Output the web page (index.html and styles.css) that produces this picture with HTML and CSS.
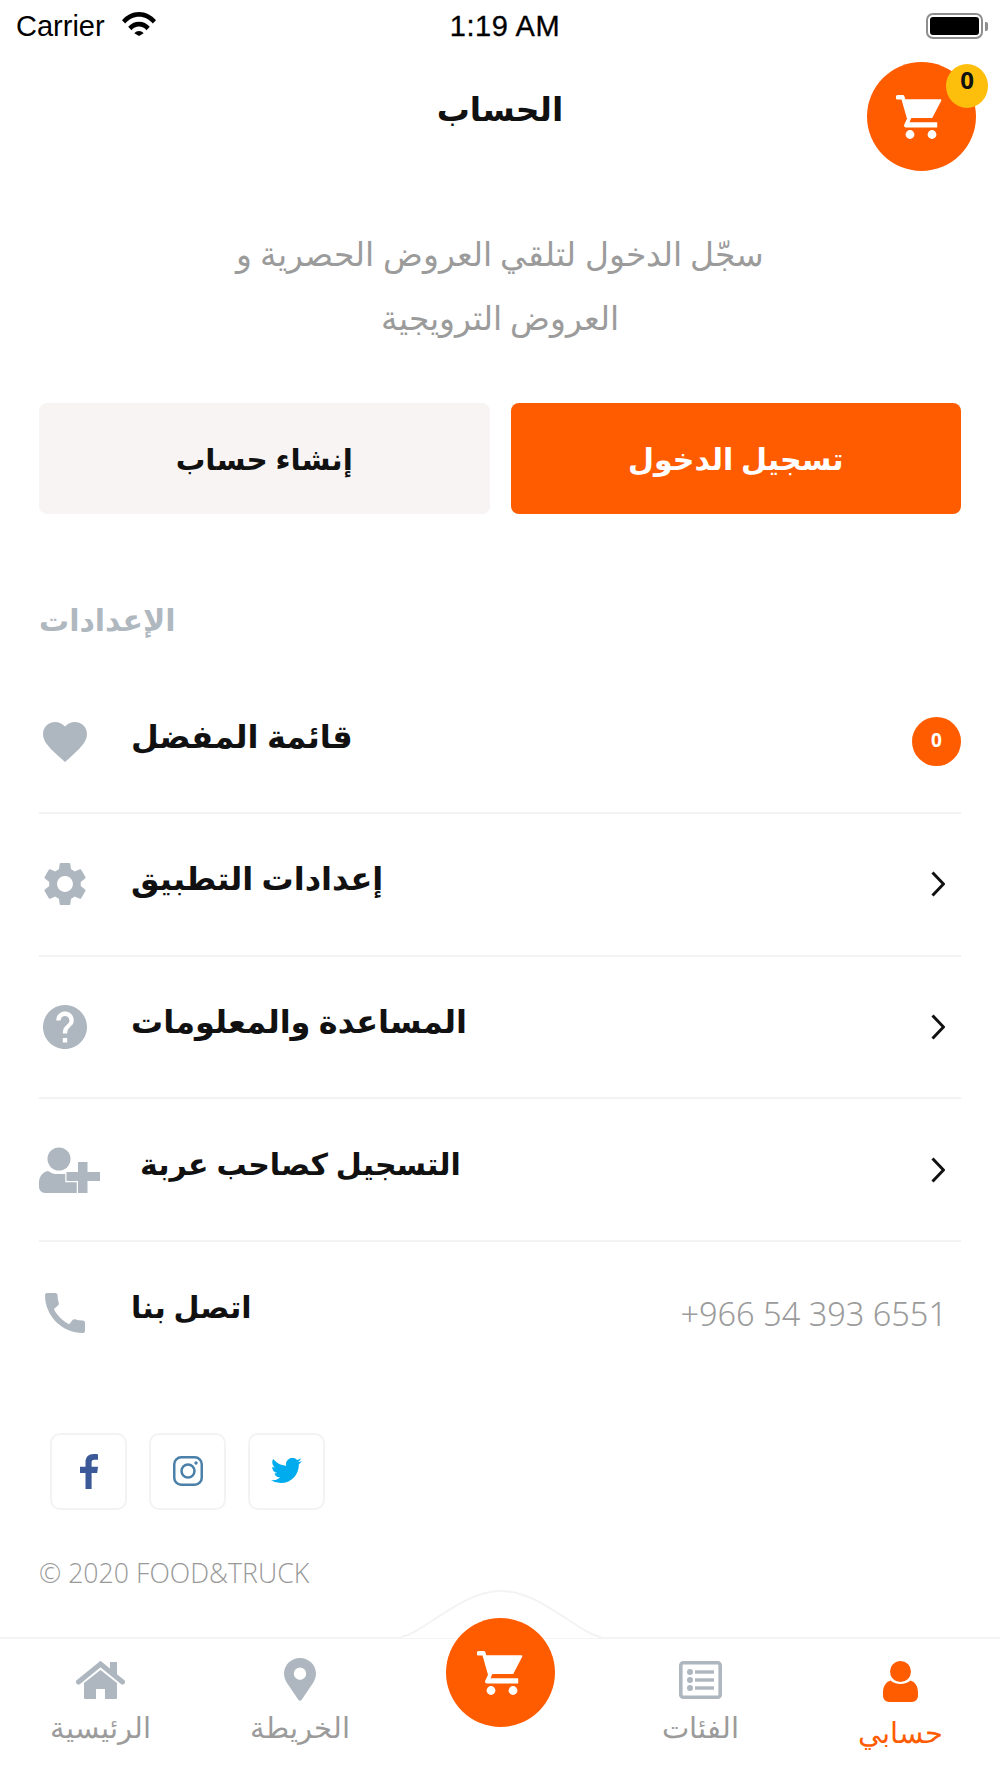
FILE: index.html
```html
<!DOCTYPE html>
<html lang="ar">
<head>
<meta charset="utf-8">
<title>الحساب</title>
<link rel="stylesheet" href="styles.css">
</head>
<body>
<div class="app">
  <div class="status">
    <div class="status-left">
      <span class="carrier">Carrier</span>
      <svg class="wifi" viewBox="0 0 34 24"><path d="M0 8.200C4.400 3.200 10.400 0 17 0s12.600 3.200 17 8.200l-3.200 3.400C27.200 7.500 22.400 4.800 17 4.800S6.800 7.500 3.200 11.600z"/><path d="M6.200 14.800C9 11.700 12.800 9.800 17 9.800s8 1.900 10.800 5l-3.300 3.400C22.600 16 20 14.600 17 14.600s-5.600 1.400-7.500 3.600z"/><path d="M12.400 21.200c1.200-1.300 2.800-2.100 4.600-2.100s3.400.8 4.600 2.100L17 24z"/></svg>
    </div>
    <span class="clock">1:19 AM</span>
    <div class="battery"><span class="battery-cell"><span class="battery-fill"></span></span><span class="battery-nub"></span></div>
  </div>

  <header class="head">
    <span></span>
    <h1 class="title">الحساب</h1>
    <div class="head-cart">
      <div class="cart-round">
        <svg class="cart" viewBox="0 0 46 44"><use href="#cart-shape"/></svg>
      </div>
      <span class="cart-count">0</span>
    </div>
  </header>

  <main class="main">
    <p class="intro">سجّل الدخول لتلقي العروض الحصرية و<br>العروض الترويجية</p>

    <div class="actions">
      <a class="btn btn-light">إنشاء حساب</a>
      <a class="btn btn-primary">تسجيل الدخول</a>
    </div>

    <h2 class="section">الإعدادات</h2>

    <ul class="list">
      <li class="row">
        <span class="row-icon"><svg class="ico-heart" viewBox="2 3 20 18.350" preserveAspectRatio="none"><path d="M12 21.350l-1.450-1.320C5.400 15.360 2 12.280 2 8.500 2 5.420 4.420 3 7.500 3c1.740 0 3.410.81 4.500 2.090C13.090 3.810 14.760 3 16.500 3 19.580 3 22 5.420 22 8.500c0 3.780-3.400 6.860-8.550 11.540L12 21.350z"/></svg></span>
        <span class="row-label">قائمة المفضل</span>
        <span class="fav-count">0</span>
      </li>
      <li class="row">
        <span class="row-icon"><svg class="ico-44" viewBox="2.500 2 19 20"><path d="M19.140 12.940c.04-.3.06-.61.06-.94 0-.32-.02-.64-.07-.94l2.030-1.580a.49.49 0 00.12-.61l-1.920-3.320a.488.488 0 00-.59-.22l-2.390.96c-.5-.38-1.030-.7-1.620-.94l-.36-2.540a.484.484 0 00-.48-.41h-3.840c-.24 0-.43.17-.47.41l-.36 2.540c-.59.24-1.130.57-1.620.94l-2.390-.96c-.22-.08-.47 0-.59.22L2.740 8.870c-.12.21-.08.47.12.61l2.030 1.580c-.05.3-.09.63-.09.94s.02.64.07.94l-2.030 1.580a.49.49 0 00-.12.61l1.920 3.320c.12.22.37.29.59.22l2.390-.96c.5.38 1.030.7 1.620.94l.36 2.540c.05.24.24.41.48.41h3.840c.24 0 .44-.17.47-.41l.36-2.540c.59-.24 1.130-.56 1.620-.94l2.390.96c.22.08.47 0 .59-.22l1.920-3.320c.12-.22.07-.47-.12-.61l-2.010-1.580zM12 15.600c-1.980 0-3.600-1.620-3.600-3.600s1.620-3.600 3.600-3.600 3.600 1.620 3.600 3.600-1.620 3.600-3.600 3.600z"/></svg></span>
        <span class="row-label">إعدادات التطبيق</span>
        <svg class="chev" viewBox="0 0 14 26"><path d="M1.500 1.500 12.500 13 1.500 24.500"/></svg>
      </li>
      <li class="row">
        <span class="row-icon"><svg class="ico-44" viewBox="2 2 20 20"><path d="M12 2C6.480 2 2 6.480 2 12s4.480 10 10 10 10-4.480 10-10S17.520 2 12 2zm1 17h-2v-2h2v2zm2.070-7.750l-.9.92C13.450 12.900 13 13.500 13 15h-2v-.5c0-1.100.45-2.100 1.170-2.830l1.240-1.260c.37-.36.59-.86.59-1.410 0-1.100-.9-2-2-2s-2 .9-2 2H8c0-2.210 1.790-4 4-4s4 1.790 4 4c0 .88-.36 1.680-.93 2.250z"/></svg></span>
        <span class="row-label">المساعدة والمعلومات</span>
        <svg class="chev" viewBox="0 0 14 26"><path d="M1.500 1.500 12.500 13 1.500 24.500"/></svg>
      </li>
      <li class="row">
        <span class="row-icon"><svg class="ico-add" viewBox="0 0 61 46"><circle cx="20" cy="12" r="11.500"/><path d="M9 24C4 25 0 29 0 36v4a6 6 0 0 0 6 6h32a6 6 0 0 0 6-6v-4c0-7-4-11-9-12-4 2.500-9 3-15 3s-7-.5-11-3z"/><path class="plus" d="M39 15h9.500v10H61v9H48.500v12H39V34H27.500v-9H39z"/></svg></span>
        <span class="row-label row-label-sm row-label-inset">التسجيل كصاحب عربة</span>
        <svg class="chev" viewBox="0 0 14 26"><path d="M1.500 1.500 12.500 13 1.500 24.500"/></svg>
      </li>
      <li class="row">
        <span class="row-icon"><svg class="ico-phone" viewBox="3 3 18 18"><path d="M20.010 15.380c-1.230 0-2.420-.2-3.530-.56a.977.977 0 00-1.010.24l-1.570 1.970c-2.830-1.350-5.480-3.900-6.890-6.830l1.950-1.660c.27-.28.35-.67.24-1.020-.37-1.110-.56-2.300-.56-3.530 0-.54-.45-.99-.99-.99H4.190C3.650 3 3 3.240 3 3.990 3 13.280 10.730 21 20.010 21c.71 0 .99-.63.99-1.180v-3.450c0-.54-.45-.99-.99-.99z"/></svg></span>
        <span class="row-label row-label-sm">اتصل بنا</span>
        <span class="tel" dir="ltr">+966 54 393 6551</span>
      </li>
    </ul>

    <div class="social">
      <a class="social-btn"><svg class="fb" viewBox="0 0 18 35"><path d="M5.500 35V19H0v-6.200h5.500V8.200C5.500 2.800 8.800 0 13.600 0c2.300 0 3.700.2 4.400.3v5.500h-3.300c-2.600 0-3.100 1.200-3.100 3v4H18l-.8 6.200h-5.600v16z"/></svg></a>
      <a class="social-btn"><svg class="ig" viewBox="0 0 30 30"><rect x="1.250" y="1.250" width="27.500" height="27.500" rx="7"/><circle cx="15" cy="15" r="6.500"/><circle class="ig-dot" cx="23" cy="7" r="1.700"/></svg></a>
      <a class="social-btn"><svg class="tw" viewBox="0 0 24 20"><path transform="translate(0 -2.400)" d="M23.953 4.570a10 10 0 01-2.825.775 4.958 4.958 0 002.163-2.723c-.951.555-2.005.959-3.127 1.184a4.920 4.920 0 00-8.384 4.482C7.690 8.095 4.067 6.130 1.640 3.162a4.822 4.822 0 00-.666 2.475c0 1.710.87 3.213 2.188 4.096a4.904 4.904 0 01-2.228-.616v.06a4.923 4.923 0 003.946 4.827 4.996 4.996 0 01-2.212.085 4.936 4.936 0 004.604 3.417 9.867 9.867 0 01-6.102 2.105c-.39 0-.779-.023-1.170-.067a13.995 13.995 0 007.557 2.209c9.053 0 13.998-7.496 13.998-13.985 0-.21 0-.42-.015-.63A9.935 9.935 0 0024 4.590z"/></svg></a>
    </div>

    <p class="copy">© 2020 FOOD&amp;TRUCK</p>
  </main>

  <nav class="tabs">
    <svg class="hump" viewBox="0 0 200 48"><path class="hump-fill" d="M0 48C25 42 60 1 100 1s75 41 100 47z"/><path class="hump-line" d="M0 47C25 42 60 1 100 1s75 41 100 46"/></svg>
    <a class="tab">
      <span class="tab-icon"><svg class="i-home" viewBox="0 0 49 38"><path class="roof" d="M2.500 21 24.500 3l22 18"/><rect x="34" y="1" width="7" height="12"/><path d="M24.500 9 41 22v15a1 1 0 0 1-1 1H29V28h-9v10H9a1 1 0 0 1-1-1V22z"/></svg></span>
      <span class="tab-label">الرئيسية</span>
    </a>
    <a class="tab">
      <span class="tab-icon"><svg class="i-pin" viewBox="0 0 32 43"><path fill-rule="evenodd" d="M16 0C7.200 0 0 7 0 15.500c0 4 1.500 7 3 9.500l11.500 17a1.800 1.800 0 0 0 3 0L29 25c1.500-2.500 3-5.500 3-9.500C32 7 24.800 0 16 0zm0 9.500a6.200 6.200 0 1 1 0 12.400 6.200 6.200 0 0 1 0-12.400z"/></svg></span>
      <span class="tab-label">الخريطة</span>
    </a>
    <a class="tab tab-center">
      <div class="cart-round">
        <svg class="cart" viewBox="0 0 46 44"><use href="#cart-shape"/></svg>
      </div>
    </a>
    <a class="tab">
      <span class="tab-icon"><svg class="i-list" viewBox="0 0 43 38"><rect class="frame" x="1.800" y="1.800" width="39.400" height="34.400" rx="2.500"/><circle cx="11" cy="11" r="3"/><circle cx="11" cy="19" r="3"/><circle cx="11" cy="27" r="3"/><rect x="16" y="9.300" width="19" height="3.400"/><rect x="16" y="17.300" width="19" height="3.400"/><rect x="16" y="25.300" width="19" height="3.400"/></svg></span>
      <span class="tab-label">الفئات</span>
    </a>
    <a class="tab tab-active">
      <span class="tab-icon"><svg class="i-user" viewBox="0 0 35 41"><circle cx="17.500" cy="10.500" r="10.500"/><path d="M7.500 19.500C3 21 0 25 0 32v3a6 6 0 0 0 6 6h23a6 6 0 0 0 6-6v-3c0-7-3-11-7.500-12.500-2.500 2.300-6 3.500-10 3.500s-7.500-1.200-10-3.500z"/></svg></span>
      <span class="tab-label">حسابي</span>
    </a>
  </nav>
</div>

<svg class="defs" width="0" height="0">
  <defs>
    <g id="cart-shape">
      <path d="M2 0H6.800Q8 0 8.400 1.200L9.300 4.300H44.300a1 1 0 0 1 .9 1.400L36.500 22.400a1 1 0 0 1-.9.6H15.300L13.500 27.200H41.200v5.300H10a2 2 0 0 1-1.700-3L11 23.800 5.500 4.600H2a2.300 2.300 0 0 1 0-4.600z"/>
      <circle cx="14" cy="39.500" r="4.400"/>
      <circle cx="36" cy="39.500" r="4.400"/>
    </g>
  </defs>
</svg>
</body>
</html>
```
FILE: styles.css
```css
* { box-sizing: border-box; }
html, body { margin: 0; padding: 0; background: #fff; }
body { font-family: "Noto Sans", "DejaVu Sans", sans-serif; color: #111; }
h1, h2, p, ul { margin: 0; padding: 0; }
ul { list-style: none; }
.defs { display: block; height: 0; }

.app { width: 1000px; height: 1778px; display: flex; flex-direction: column; overflow: hidden; }

.status { height: 52px; padding: 0 12px 0 16px; display: grid; grid-template-columns: 1fr auto 1fr; align-items: center; font-family: "Liberation Sans", sans-serif; font-size: 29px; color: #000; }
.status-left { display: flex; align-items: center; gap: 17px; }
.wifi { width: 34px; height: 24px; fill: #000; margin-top: -4px; }
.clock { text-align: center; letter-spacing: .6px; -webkit-text-stroke: .3px #000; margin-left: 6px; }
.battery { justify-self: end; display: flex; align-items: center; gap: 2px; }
.battery-cell { width: 57px; height: 26px; border: 2.500px solid #8e8e8e; border-radius: 7px; padding: 2px; display: block; }
.battery-fill { display: block; width: 100%; height: 100%; background: #000; border-radius: 3px; }
.battery-nub { width: 3px; height: 9px; background: #8e8e8e; border-radius: 0 2px 2px 0; }

.head { margin-top: 10px; height: 109px; padding: 0 24px; display: grid; grid-template-columns: 1fr auto 1fr; align-items: center; }
.title { font-size: 33px; font-weight: 700; text-align: center; padding-bottom: 17px; }
.head-cart { justify-self: end; position: relative; }
.head-cart .cart { margin-right: 6px; }
.cart-round { width: 109px; height: 109px; border-radius: 50%; background: #ff5c00; display: flex; align-items: center; justify-content: center; }
.cart { width: 46px; height: 44px; fill: #fff; }
.cart-count { position: absolute; top: 2px; right: -12px; width: 42px; height: 44px; border-radius: 50%; background: #fdbe0c; color: #111; font-size: 24px; font-weight: 700; text-align: center; line-height: 32px; }

.main { flex: 1; padding: 0 39px; display: flex; flex-direction: column; }
.intro { margin-top: 51px; font-size: 32.500px; font-weight: 300; line-height: 64px; text-align: center; color: #9b9b9b; }
.actions { margin-top: 53px; display: grid; grid-template-columns: 1fr 1fr; gap: 21px; }
.btn { height: 111px; border-radius: 8px; display: flex; align-items: center; justify-content: center; font-size: 30px; font-weight: 700; }
.btn-light { background: #f7f4f3; color: #111; font-size: 29.500px; }
.btn-primary { background: #ff5c00; color: #fff; }

.section { margin-top: 86px; height: 40px; line-height: 40px; font-size: 30px; font-weight: 700; color: #b0b8bf; }

.list { margin-top: 31.500px; }
.row { height: 142.600px; display: flex; align-items: center; border-bottom: 2px solid #f3f3f3; }
.row:last-child { border-bottom: 0; }
.row-icon { width: 92px; flex: none; display: flex; fill: #aeb7bf; }
.ico-44 { width: 52px; height: 44px; }
.ico-heart { width: 44px; height: 40px; margin-left: 4px; }
.ico-phone { width: 40px; height: 40px; margin-left: 6px; }
.ico-add { width: 61px; height: 46px; }
.plus { stroke: #fff; stroke-width: 2.500; paint-order: stroke; }
.row-label { font-size: 32px; font-weight: 700; padding-bottom: 13px; }
.row-label-sm { font-size: 30px; }
.row-label-inset { margin-left: 9px; }
.fav-count { margin-left: auto; width: 49px; height: 49px; border-radius: 50%; background: #ff5c00; color: #fff; font-size: 19px; font-weight: 700; padding-bottom: 3px; display: flex; align-items: center; justify-content: center; }
.chev { margin-left: auto; margin-right: 16px; width: 14px; height: 26px; fill: none; stroke: #111; stroke-width: 3; }
.tel { margin-left: auto; margin-right: 14px; font-size: 32.500px; font-weight: 300; color: #9b9b9b; }

.social { margin-top: 48.500px; padding-left: 11px; display: flex; gap: 22px; }
.social-btn { width: 77px; height: 77px; border: 2px solid #f3f3f3; border-radius: 10px; display: flex; align-items: center; justify-content: center; }
.fb { width: 18px; height: 35px; fill: #3b5998; }
.ig { width: 30px; height: 30px; fill: none; stroke: #4a80a9; stroke-width: 2.500; }
.ig-dot { fill: #4a80a9; stroke: none; }
.tw { width: 31px; height: 26px; fill: #00aced; }

.copy { margin-top: 45px; font-family: "Open Sans", sans-serif; font-weight: 300; font-size: 26.700px; line-height: 36px; color: #999; }

.tabs { position: relative; height: 141px; border-top: 2px solid #f4f4f4; display: grid; grid-template-columns: repeat(5, 1fr); }
.hump { position: absolute; left: 401px; top: -49px; width: 200px; height: 48px; }
.hump-fill { fill: #fff; }
.hump-line { fill: none; stroke: #f3f3f3; stroke-width: 2; }
.tab { display: flex; flex-direction: column; align-items: center; padding-top: 19px; }
.tab-icon { height: 43px; display: flex; align-items: center; fill: #aeb7bf; }
.tab-label { margin-top: 6px; font-size: 28.500px; font-weight: 300; color: #9b9b9b; line-height: 40px; }
.i-home { width: 49px; height: 38px; }
.roof { fill: none; stroke: #aeb7bf; stroke-width: 5; stroke-linecap: round; }
.i-pin { width: 32px; height: 43px; }
.i-list { width: 43px; height: 38px; }
.frame { fill: none; stroke: #aeb7bf; stroke-width: 3.600; }
.i-user { width: 35px; height: 41px; fill: #ff5c00; }
.tab-active .tab-label { color: #ff5c00; margin-top: 9px; }
.tab-active .tab-icon { margin-top: 2px; }
.tab-center { padding-top: 0; margin-top: -21px; position: relative; }
```
